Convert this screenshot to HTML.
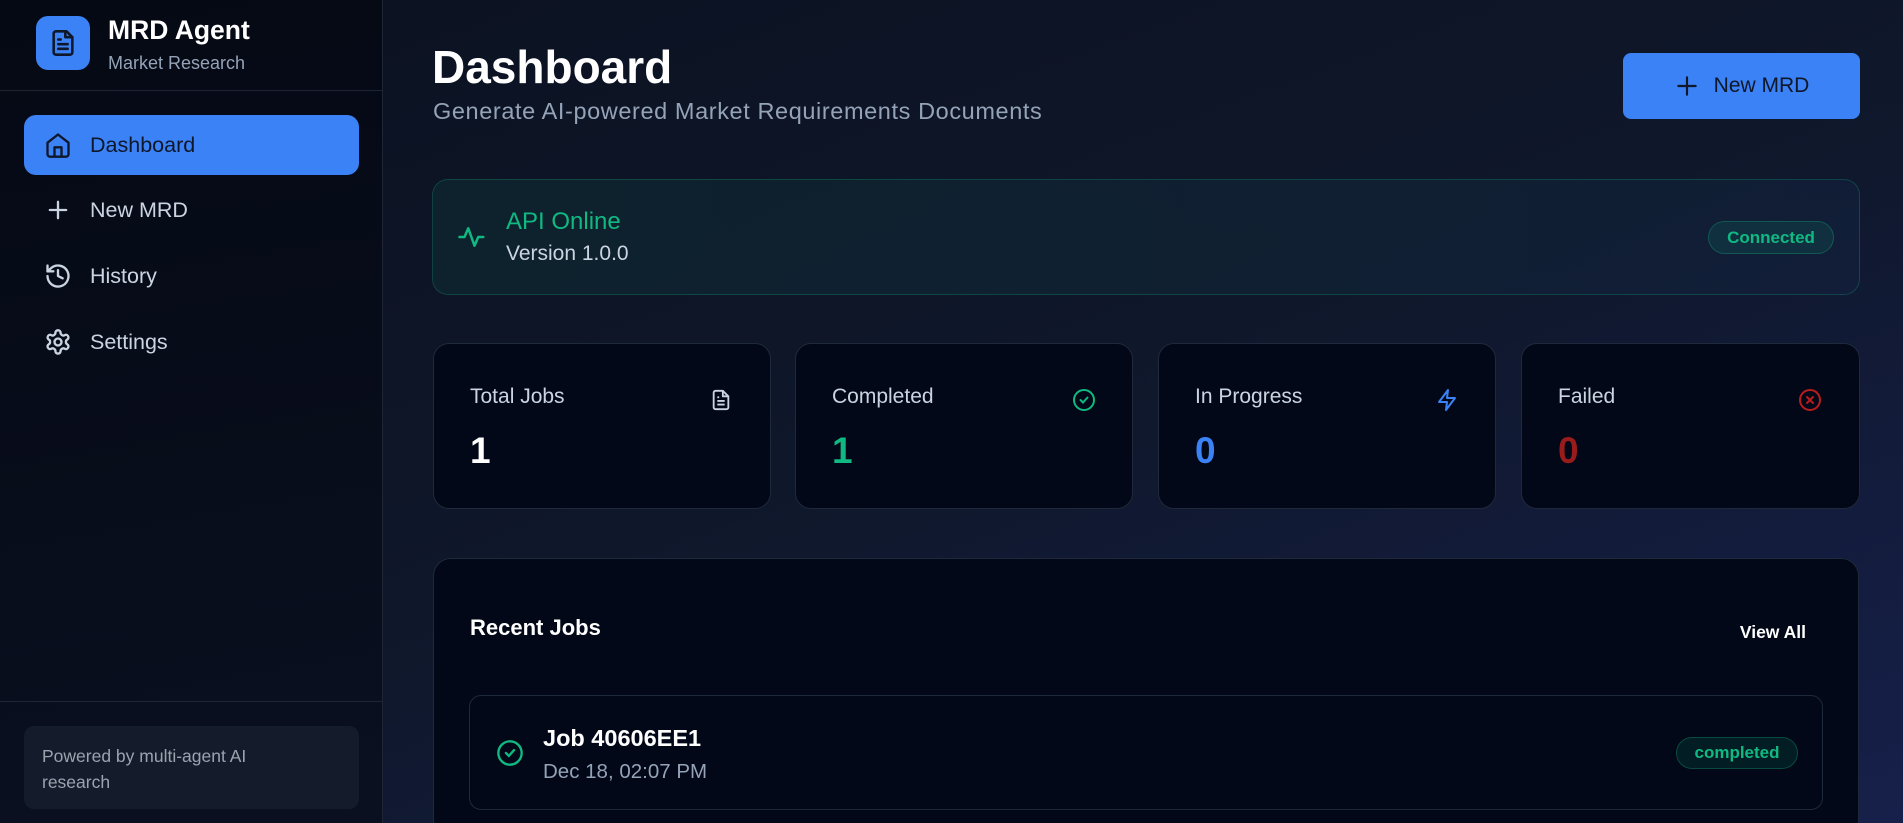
<!DOCTYPE html>
<html><head><meta charset="utf-8"><style>
*{box-sizing:border-box;margin:0;padding:0}
html,body{width:1903px;height:823px;overflow:hidden}
body{font-family:"Liberation Sans",sans-serif;background:linear-gradient(160deg,#0b1120 0%,#0f172a 50%,#16204a 100%);position:relative;color:#fff}
.abs{position:absolute}
.side{left:0;top:0;width:383px;height:823px;background:linear-gradient(170deg,#050914,#0a1020);border-right:1px solid #1e2535}
.nav{left:24px;width:335px;height:60px;border-radius:12px;display:flex;align-items:center;padding-left:20px;font-size:21.5px;color:#cbd5e1}
.nav svg{width:28px;height:28px;margin-right:18px}
.card{background:#020817;border:1px solid #1e293b;border-radius:16px}
.lbl{font-size:21px;color:#cbd5e1}
.num{font-size:37px;font-weight:bold}
</style></head><body>
<div class="abs side">
  <div class="abs" style="left:36px;top:16px;width:54px;height:54px;border-radius:12px;background:#3b82f6;display:flex;align-items:center;justify-content:center">
    <svg width="28" height="30" viewBox="0 0 24 24" fill="none" stroke="#0f172a" stroke-width="2.2" stroke-linecap="round" stroke-linejoin="round"><path d="M15 2H6a2 2 0 0 0-2 2v16a2 2 0 0 0 2 2h12a2 2 0 0 0 2-2V7z"/><path d="M14 2v5h6"/><path d="M8 13h8M8 17h8M8 9h2"/></svg>
  </div>
  <div class="abs" style="left:108px;top:15px;font-size:26.5px;font-weight:bold">MRD Agent</div>
  <div class="abs" style="left:108px;top:53px;font-size:18px;color:#94a3b8">Market Research</div>
  <div class="abs" style="left:0;top:90px;width:383px;height:1px;background:#1e2535"></div>
  <div class="abs nav" style="top:115px;background:#3b82f6;color:#0f172a"><svg viewBox="0 0 24 24" fill="none" stroke="#0f172a" stroke-width="2" stroke-linejoin="round"><path d="M3 10l9-7 9 7v10a2 2 0 0 1-2 2H5a2 2 0 0 1-2-2z"/><path d="M9 22v-8h6v8"/></svg>Dashboard</div>
  <div class="abs nav" style="top:180px"><svg viewBox="0 0 24 24" fill="none" stroke="#cbd5e1" stroke-width="2" stroke-linecap="round"><path d="M12 5v14M5 12h14"/></svg>New MRD</div>
  <div class="abs nav" style="top:246px"><svg viewBox="0 0 24 24" fill="none" stroke="#cbd5e1" stroke-width="2" stroke-linecap="round" stroke-linejoin="round"><path d="M3 12a9 9 0 1 0 3-6.7L3 8"/><path d="M3 3v5h5"/><path d="M12 7v5l4 2"/></svg>History</div>
  <div class="abs nav" style="top:312px"><svg viewBox="0 0 24 24" fill="none" stroke="#cbd5e1" stroke-width="2" stroke-linejoin="round"><path d="M12.2 2h-.4a2 2 0 0 0-2 2v.2a2 2 0 0 1-1 1.7l-.4.3a2 2 0 0 1-2 0l-.2-.1a2 2 0 0 0-2.7.7l-.2.4a2 2 0 0 0 .7 2.7l.2.1a2 2 0 0 1 1 1.7v.5a2 2 0 0 1-1 1.7l-.2.1a2 2 0 0 0-.7 2.7l.2.4a2 2 0 0 0 2.7.7l.2-.1a2 2 0 0 1 2 0l.4.3a2 2 0 0 1 1 1.7v.2a2 2 0 0 0 2 2h.4a2 2 0 0 0 2-2v-.2a2 2 0 0 1 1-1.7l.4-.3a2 2 0 0 1 2 0l.2.1a2 2 0 0 0 2.7-.7l.2-.4a2 2 0 0 0-.7-2.7l-.2-.1a2 2 0 0 1-1-1.7v-.5a2 2 0 0 1 1-1.7l.2-.1a2 2 0 0 0 .7-2.7l-.2-.4a2 2 0 0 0-2.7-.7l-.2.1a2 2 0 0 1-2 0l-.4-.3a2 2 0 0 1-1-1.7V4a2 2 0 0 0-2-2z"/><circle cx="12" cy="12" r="3"/></svg>Settings</div>
  <div class="abs" style="left:0;top:701px;width:383px;height:1px;background:#1e2535"></div>
  <div class="abs" style="left:24px;top:726px;width:335px;height:83px;border-radius:10px;background:#141c2c;padding:17px 60px 0 18px;font-size:17.5px;line-height:26px;color:#9ca3af">Powered by multi-agent AI research</div>
</div>

<div class="abs" style="left:432px;top:40px;font-size:46px;font-weight:bold">Dashboard</div>
<div class="abs" style="left:433px;top:98px;font-size:23.5px;color:#94a3b8;letter-spacing:.6px">Generate AI-powered Market Requirements Documents</div>
<div class="abs" style="left:1623px;top:53px;width:237px;height:66px;border-radius:8px;background:#3b82f6;display:flex;align-items:center;justify-content:center;font-size:21px;color:#0f172a">
  <svg width="26" height="26" viewBox="0 0 24 24" fill="none" stroke="#0f172a" stroke-width="2" stroke-linecap="round" style="margin-right:14px"><path d="M12 4v16M4 12h16"/></svg>New MRD</div>

<div class="abs" style="left:432px;top:179px;width:1428px;height:116px;border-radius:16px;border:1px solid rgba(16,185,129,.25);background:linear-gradient(90deg,rgba(16,60,60,.35),rgba(20,40,70,.35))">
  <svg class="abs" style="left:24px;top:40px" width="30" height="34" viewBox="0 0 24 24" fill="none" stroke="#10b981" stroke-width="2" stroke-linecap="round" stroke-linejoin="round"><path d="M2 12h4l3-7 5 14 3-7h4"/></svg>
  <div class="abs" style="left:73px;top:28px;font-size:24px;color:#10b981">API Online</div>
  <div class="abs" style="left:73px;top:62px;font-size:21px;color:#cbd5e1">Version 1.0.0</div>
  <div class="abs" style="left:1275px;top:41px;width:126px;height:33px;border-radius:17px;background:rgba(16,185,129,.12);border:1px solid rgba(16,185,129,.3);color:#10b981;font-weight:bold;font-size:17px;display:flex;align-items:center;justify-content:center">Connected</div>
</div>

<div class="abs card" style="left:433px;top:343px;width:338px;height:166px">
  <div class="abs lbl" style="left:36px;top:41px">Total Jobs</div>
  <svg class="abs" style="left:276px;top:44px" width="22" height="24" viewBox="0 0 24 24" fill="none" stroke="#cbd5e1" stroke-width="2" stroke-linejoin="round"><path d="M14 2H6a2 2 0 0 0-2 2v16a2 2 0 0 0 2 2h12a2 2 0 0 0 2-2V8z"/><path d="M14 2v6h6M8 13h8M8 17h8M8 9h2"/></svg>
  <div class="abs num" style="left:36px;top:86px;color:#fff">1</div>
</div>
<div class="abs card" style="left:795px;top:343px;width:338px;height:166px">
  <div class="abs lbl" style="left:36px;top:41px">Completed</div>
  <svg class="abs" style="left:276px;top:44px" width="24" height="24" viewBox="0 0 24 24" fill="none" stroke="#10b981" stroke-width="2" stroke-linecap="round"><circle cx="12" cy="12" r="10"/><path d="M8.5 12l2.5 2.5 4.5-5"/></svg>
  <div class="abs num" style="left:36px;top:86px;color:#10b981">1</div>
</div>
<div class="abs card" style="left:1158px;top:343px;width:338px;height:166px">
  <div class="abs lbl" style="left:36px;top:41px">In Progress</div>
  <svg class="abs" style="left:276px;top:44px" width="24" height="24" viewBox="0 0 24 24" fill="none" stroke="#3b82f6" stroke-width="2" stroke-linejoin="round"><path d="M13 2L4 14h8l-1 8 9-12h-8z"/></svg>
  <div class="abs num" style="left:36px;top:86px;color:#3b82f6">0</div>
</div>
<div class="abs card" style="left:1521px;top:343px;width:339px;height:166px">
  <div class="abs lbl" style="left:36px;top:41px">Failed</div>
  <svg class="abs" style="left:276px;top:44px" width="24" height="24" viewBox="0 0 24 24" fill="none" stroke="#b91c1c" stroke-width="2" stroke-linecap="round"><circle cx="12" cy="12" r="10"/><path d="M9 9l6 6M15 9l-6 6"/></svg>
  <div class="abs num" style="left:36px;top:86px;color:#991b1b">0</div>
</div>

<div class="abs card" style="left:433px;top:558px;width:1426px;height:280px;border-radius:18px">
  <div class="abs" style="left:36px;top:56px;font-size:22px;font-weight:bold">Recent Jobs</div>
  <div class="abs" style="right:52px;top:63px;font-size:17.5px;font-weight:bold">View All</div>
  <div class="abs" style="left:35px;top:136px;width:1354px;height:115px;border:1px solid #1e293b;border-radius:12px">
    <svg class="abs" style="left:26px;top:43px" width="28" height="28" viewBox="0 0 24 24" fill="none" stroke="#10b981" stroke-width="2" stroke-linecap="round"><circle cx="12" cy="12" r="10"/><path d="M8.5 12l2.5 2.5 4.5-5"/></svg>
    <div class="abs" style="left:73px;top:29px;font-size:23.5px;font-weight:bold">Job 40606EE1</div>
    <div class="abs" style="left:73px;top:64px;font-size:20.5px;color:#94a3b8">Dec 18, 02:07 PM</div>
    <div class="abs" style="left:1206px;top:41px;width:122px;height:32px;border-radius:16px;background:rgba(16,185,129,.12);border:1px solid rgba(16,185,129,.3);color:#10b981;font-weight:bold;font-size:17px;display:flex;align-items:center;justify-content:center">completed</div>
  </div>
</div>
</body></html>
